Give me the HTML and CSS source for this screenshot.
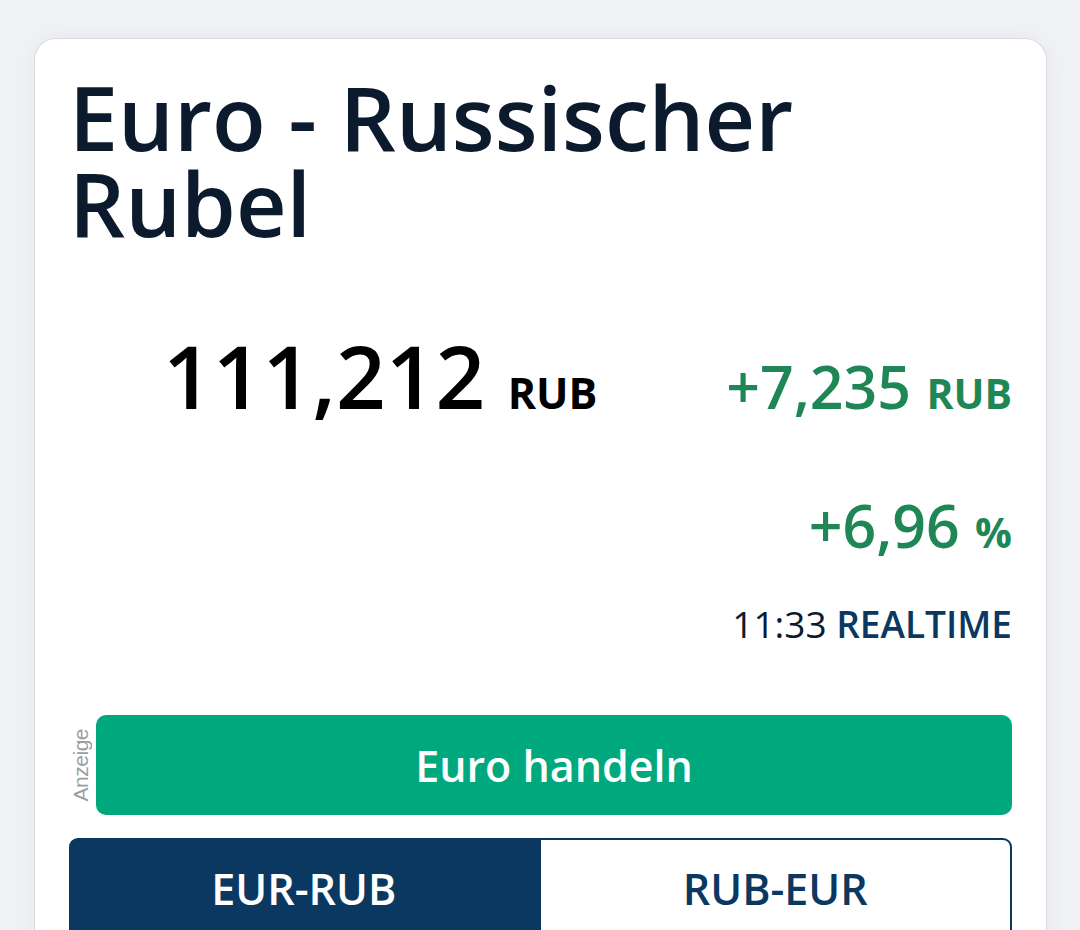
FILE: index.html
```html
<!DOCTYPE html>
<html lang="de">
<head>
  <meta charset="UTF-8" />
  <title>Euro - Russischer Rubel</title>
  <link rel="stylesheet" href="styles.css">
</head>
<body>

  <!-- Kurs-Karte -->
  <div class="card">
    <h1 class="title">Euro - Russischer Rubel</h1>

    <div class="quote">
      <div class="price">111,212 <span class="unit">RUB</span></div>
      <div class="changes">
        <div class="change">+7,235 <span class="unit-sm">RUB</span></div>
        <div class="change pct">+6,96 <span class="unit-sm">%</span></div>
        <div class="time">11:33 <span class="realtime">REALTIME</span></div>
      </div>
    </div>

    <!-- Anzeige -->
    <div class="ad">
      <span class="ad-label">Anzeige</span>
      <button class="trade">Euro handeln</button>
    </div>

    <!-- Tabs -->
    <div class="tabs">
      <div class="tab active">EUR-RUB</div>
      <div class="tab">RUB-EUR</div>
    </div>
  </div>

</body>
</html>
```

FILE: styles.css
```css
body {
  margin: 0;
  background: #f1f2f4;
  font-family: "Open Sans", Arial, sans-serif;
  color: #0c1a2e;
  overflow: hidden;
}

.card {
  margin: 38px 33px 0 34px;
  padding: 35px 34px 0 34px;
  background: #fff;
  border: 1px solid #d9dce1;
  border-bottom: none;
  border-radius: 22px 22px 0 0;
  box-shadow: 0 0 28px rgba(20, 30, 50, 0.05);
  height: 1000px;
}

.title {
  margin: 0;
  font-size: 88px;
  line-height: 86px;
  font-weight: 600;
}

.quote {
  display: flex;
  justify-content: space-between;
  align-items: baseline;
  margin-top: 85px;
}

.price {
  padding-left: 94px;
  font-size: 87px;
  line-height: 88px;
  font-weight: 600;
  color: #000;
}

.unit {
  font-size: 43px;
  font-weight: 700;
}

.changes {
  text-align: right;
}

.change {
  font-size: 59px;
  line-height: 60px;
  font-weight: 600;
  color: #1f8756;
}

.change.pct {
  margin-top: 72px;
}

.unit-sm {
  font-size: 41px;
  font-weight: 700;
}

.time {
  margin-top: 42px;
  font-size: 37px;
  line-height: 40px;
}

.realtime {
  font-weight: 600;
  color: #0b3861;
}

.ad {
  display: flex;
  align-items: center;
  margin-top: 71px;
}

.ad-label {
  width: 27px;
  writing-mode: vertical-rl;
  transform: rotate(180deg);
  font-family: "Liberation Sans", Arial, sans-serif;
  font-size: 21px;
  letter-spacing: -0.5px;
  color: #9a9da3;
  text-align: center;
}

.trade {
  flex: 1;
  height: 100px;
  border: none;
  border-radius: 10px;
  background: #00a87d;
  color: #fff;
  font-family: "Open Sans", Arial, sans-serif;
  font-size: 43px;
  font-weight: 600;
  cursor: pointer;
}

.tabs {
  display: flex;
  margin-top: 23px;
}

.tab {
  flex: 1;
  height: 100px;
  display: flex;
  align-items: center;
  justify-content: center;
  font-size: 43px;
  font-weight: 600;
  color: #0b3861;
  border: 2px solid #0b3861;
  box-sizing: border-box;
  border-radius: 0 9px 0 0;
  border-left: none;
}

.tab.active {
  background: #0b3861;
  color: #fff;
  border-radius: 9px 0 0 0;
}
```
